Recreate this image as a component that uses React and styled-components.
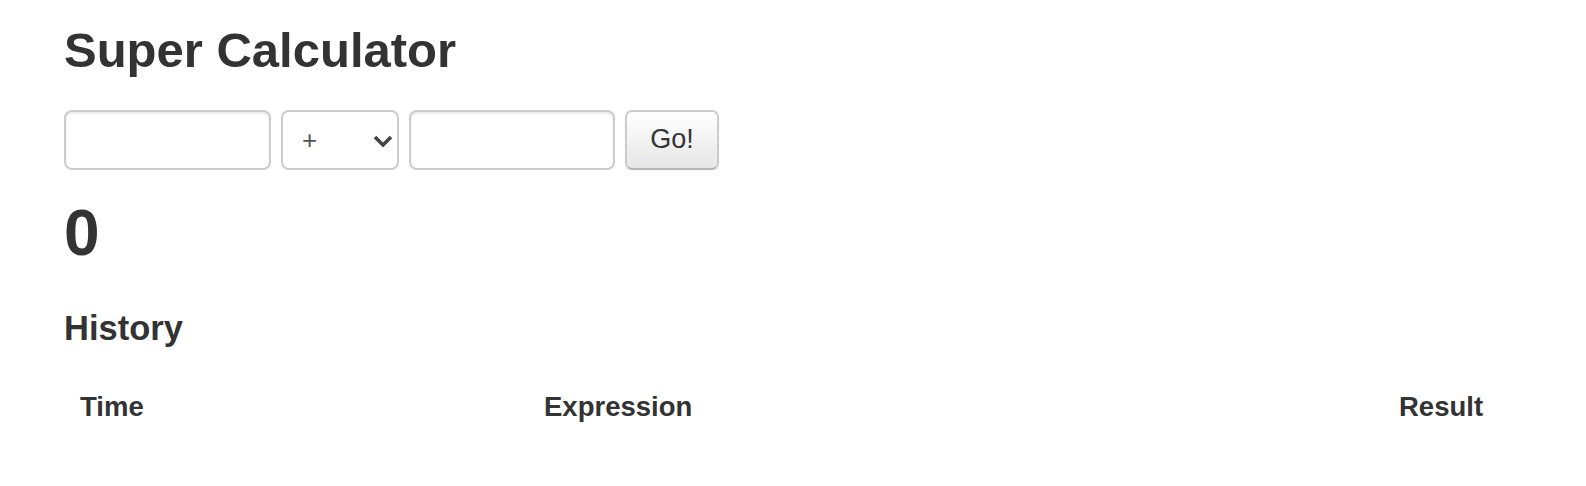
import styled, { createGlobalStyle } from "styled-components";

const GlobalStyle = createGlobalStyle`
  html, body {
    margin: 0;
    padding: 0;
    background: #fff;
  }
  body {
    font-family: "Liberation Sans", Arial, Helvetica, sans-serif;
    color: #333;
  }
`

const Container = styled.div`
  padding: 24px 64px 0 64px;
`
const Title = styled.h1`
  margin: 0;
  font-size: 49px;
  line-height: 1.1;
  font-weight: 700;
`
const Form = styled.div`
  display: flex;
  align-items: center;
  gap: 10px;
  margin-top: 32px;
`
const Input = styled.input`
  box-sizing: border-box;
  width: ${props => props.$width}px;
  height: 60px;
  border: 2px solid #ccc;
  border-radius: 8px;
  padding: 6px 14px;
  font-family: inherit;
  font-size: 26px;
  color: #555;
  box-shadow: inset 0 2px 2px rgba(0, 0, 0, 0.075);
  outline: none;
`
const SelectWrap = styled.div`
  position: relative;
  width: 118px;
  height: 60px;
`
const Select = styled.select`
  box-sizing: border-box;
  appearance: none;
  -webkit-appearance: none;
  width: 100%;
  height: 100%;
  border: 2px solid #ccc;
  border-radius: 8px;
  background: #fff;
  padding: 0 0 0 19px;
  font-family: inherit;
  font-size: 26px;
  color: #555;
  outline: none;
`
const Chevron = styled.svg`
  position: absolute;
  left: 92px;
  top: 25px;
  pointer-events: none;
`
const Button = styled.button`
  box-sizing: border-box;
  width: 94px;
  height: 60px;
  border: 2px solid #ccc;
  border-bottom-color: #b8b8b8;
  border-radius: 7px;
  background: linear-gradient(to bottom, #ffffff, #e6e6e6);
  box-shadow: inset 0 1px 0 rgba(255, 255, 255, 0.2), 0 1px 2px rgba(0, 0, 0, 0.05);
  font-family: inherit;
  font-size: 27px;
  color: #333;
  padding: 0;
  cursor: pointer;
`
const Result = styled.h1`
  margin: 28px 0 0 0;
  font-size: 64px;
  line-height: 1.1;
  font-weight: 700;
`
const SubTitle = styled.h3`
  margin: 42px 0 0 0;
  font-size: 34.5px;
  line-height: 1.1;
  font-weight: 700;
`
const Table = styled.table`
  margin-top: 31px;
  width: 1457px;
  border-collapse: collapse;
  table-layout: fixed;
`
const Th = styled.th`
  box-sizing: border-box;
  width: ${props => (props.$width ? props.$width + "px" : "auto")};
  text-align: left;
  padding: 8px 16px;
  font-size: 27.5px;
  line-height: 1.43;
  font-weight: 700;
`

const App = () => {
  return (
    <Container>
      <GlobalStyle />
      <Title>Super Calculator</Title>
      <Form>
        <Input $width={207} type="text" />
        <SelectWrap>
          <Select defaultValue="+">
            <option value="+">+</option>
            <option value="-">-</option>
            <option value="*">*</option>
            <option value="/">/</option>
          </Select>
          <Chevron width="20" height="12" viewBox="0 0 20 12">
            <path d="M2 2 L10 10 L18 2" fill="none" stroke="#444" strokeWidth="3.6" />
          </Chevron>
        </SelectWrap>
        <Input $width={206} type="text" />
        <Button>Go!</Button>
      </Form>
      <Result>0</Result>
      <SubTitle>History</SubTitle>
      <Table>
        <thead>
          <tr>
            <Th $width={464}>Time</Th>
            <Th $width={855}>Expression</Th>
            <Th>Result</Th>
          </tr>
        </thead>
      </Table>
    </Container>
  )
}

export default App
